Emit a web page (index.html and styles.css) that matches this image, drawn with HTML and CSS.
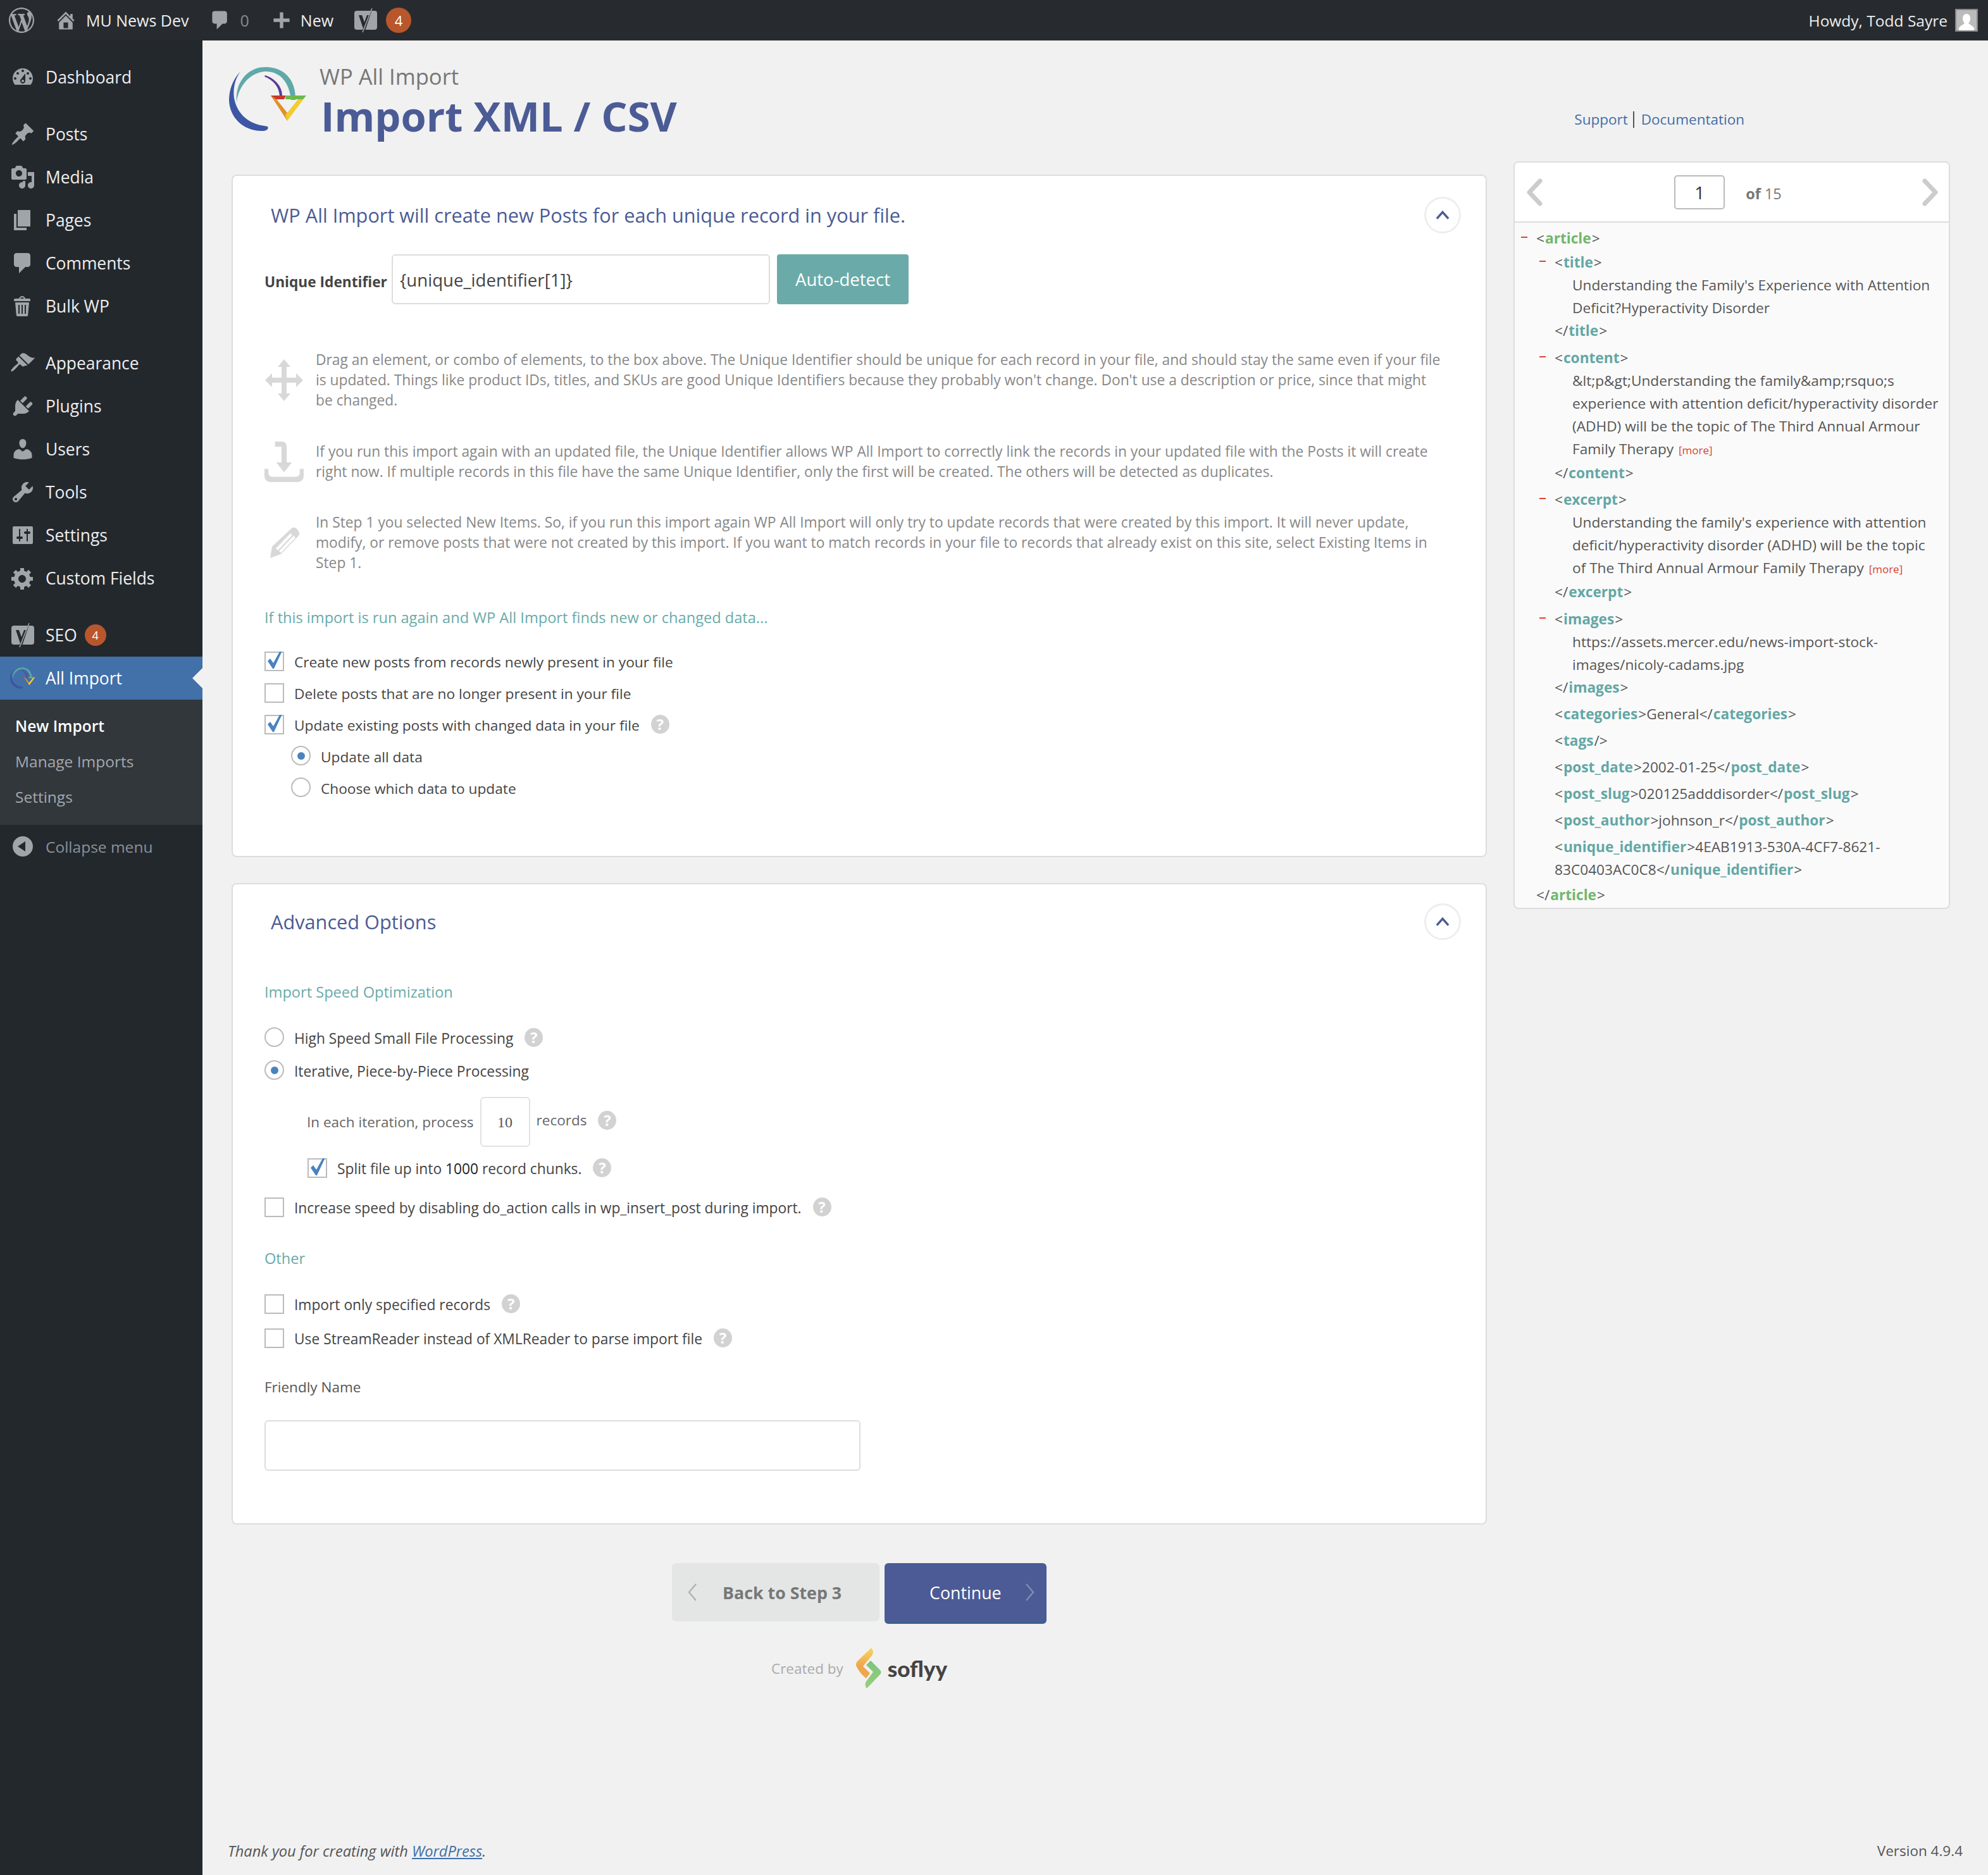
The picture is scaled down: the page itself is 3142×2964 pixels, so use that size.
FILE: index.html
```html
<!DOCTYPE html>
<html lang="en">
<head>
<meta charset="utf-8">
<title>WP All Import</title>
<link rel="stylesheet" href="styles.css">
</head>
<body>
<svg class="defs" width="0" height="0" aria-hidden="true">
  <symbol id="i-wp" viewBox="0 0 20 20"><path d="M20 10c0-5.51-4.49-10-10-10C4.48 0 0 4.49 0 10c0 5.52 4.48 10 10 10 5.51 0 10-4.48 10-10zM7.78 15.37L4.37 6.22c.55-.02 1.17-.08 1.17-.08.5-.06.44-1.13-.06-1.11 0 0-1.45.11-2.37.11-.18 0-.37 0-.58-.01C4.12 2.69 6.87 1.11 10 1.11c2.33 0 4.45.87 6.05 2.34-.68-.11-1.65.39-1.65 1.58 0 .74.45 1.36.9 2.1.35.61.55 1.36.55 2.46 0 1.49-1.4 5-1.4 5l-3.03-8.37c.54-.02.82-.17.82-.17.5-.05.44-1.25-.06-1.22 0 0-1.44.12-2.37.12-.85 0-2.29-.12-2.29-.12-.5-.03-.56 1.2-.06 1.22l.92.08 1.26 3.41zM17.41 10c.24-.64.74-1.87.43-4.25.7 1.29 1.05 2.71 1.05 4.25 0 3.29-1.73 6.24-4.4 7.78.97-2.59 1.94-5.2 2.92-7.78zM6.1 18.09C3.12 16.65 1.11 13.53 1.11 10c0-1.3.23-2.48.72-3.59C3.25 10.3 4.67 14.2 6.1 18.09zm4.03-6.63l2.58 6.98c-.86.29-1.76.45-2.71.45-.79 0-1.57-.11-2.29-.33.81-2.38 1.62-4.74 2.42-7.1z"/></symbol>
  <symbol id="i-home" viewBox="0 0 20 20"><path d="M16 8.5l1.53 1.53-1.06 1.06L10 4.62l-6.47 6.47-1.06-1.06L10 2.5l4 4v-2h2v4zm-6-2.46l6 5.99V18H4v-5.97zM12 17v-5H8v5h4z"/></symbol>
  <symbol id="i-comment" viewBox="0 0 20 20"><path d="M5 2h9c1.1 0 2 .9 2 2v7c0 1.1-.9 2-2 2h-2l-5 5v-5H5c-1.1 0-2-.9-2-2V4c0-1.1.9-2 2-2z"/></symbol>
  <symbol id="i-plus" viewBox="0 0 20 20"><path d="M17 8.5v3h-5.5V17h-3v-5.5H3v-3h5.5V3h3v5.5z"/></symbol>
  <symbol id="i-yoast" viewBox="0 0 36 40"><path d="M4 5h22L16 35H4a4 4 0 0 1-4-4V9a4 4 0 0 1 4-4zM27.500 5H32a4 4 0 0 1 4 4v22a4 4 0 0 1-4 4H17.500z"/><path class="y-cut" d="M7 12h5l4 11 4-11h5l-9 22c-1 3-3 5-6 5v-3c2 0 3-1 4-3z"/><path class="y-line" d="M28 1L13 39"/></symbol>
  <symbol id="i-dash" viewBox="0 0 20 20"><path d="M3.760 16h12.480c1.100-1.370 1.760-3.110 1.760-5 0-4.420-3.580-8-8-8s-8 3.580-8 8c0 1.890.660 3.630 1.760 5zM10 4c.55 0 1 .45 1 1s-.45 1-1 1-1-.45-1-1 .45-1 1-1zM6 6c.55 0 1 .45 1 1s-.45 1-1 1-1-.45-1-1 .45-1 1-1zm8 0c.55 0 1 .45 1 1s-.45 1-1 1-1-.45-1-1 .45-1 1-1zm-5.370 5.550L12 7v6c0 1.100-.9 2-2 2s-2-.9-2-2c0-.57.24-1.080.63-1.450zM4 10c.55 0 1 .45 1 1s-.45 1-1 1-1-.45-1-1 .45-1 1-1zm12 0c.55 0 1 .45 1 1s-.45 1-1 1-1-.45-1-1 .45-1 1-1zm-5 3c0-.55-.45-1-1-1s-1 .45-1 1 .45 1 1 1 1-.45 1-1z"/></symbol>
  <symbol id="i-pin" viewBox="0 0 20 20"><path d="M10.440 3.020l1.820-1.820 6.360 6.350-1.830 1.820c-1.050-.68-2.480-.57-3.410.36l-.75.75c-.92.93-1.040 2.350-.35 3.410l-1.830 1.820-2.410-2.410-2.800 2.790c-.42.42-3.380 2.710-3.800 2.290s1.860-3.390 2.280-3.810l2.790-2.790L4.100 9.360l1.830-1.820c1.050.69 2.480.57 3.400-.36l.75-.75c.93-.92 1.050-2.350.36-3.410z"/></symbol>
  <symbol id="i-media" viewBox="0 0 20 20"><path d="M13 11V4c0-.55-.45-1-1-1h-1.670L9 1H5L3.670 3H2c-.55 0-1 .45-1 1v7c0 .55.45 1 1 1h10c.55 0 1-.45 1-1zM7 4.500c1.380 0 2.500 1.120 2.500 2.500S8.380 9.500 7 9.500 4.500 8.380 4.500 7 5.620 4.500 7 4.500zM14 6h5v10.500c0 1.380-1.120 2.500-2.500 2.500S14 17.880 14 16.500s1.120-2.500 2.500-2.500c.17 0 .34.02.5.05V9h-3V6zm-4 8.050V13h2v3.500c0 1.380-1.120 2.500-2.500 2.500S7 17.880 7 16.500 8.120 14 9.500 14c.17 0 .34.02.5.05z"/></symbol>
  <symbol id="i-pages" viewBox="0 0 20 20"><path d="M6 15V2h10v13H6zm-1 1h8v2H3V5h2v11z"/></symbol>
  <symbol id="i-trash" viewBox="0 0 20 20"><path d="M12 4h3c.6 0 1 .4 1 1v1H3V5c0-.6.5-1 1-1h3c.2-1.100 1.300-2 2.500-2s2.300.9 2.500 2zM8 4h3c-.2-.6-.9-1-1.500-1S8.200 3.400 8 4zM4 7h11l-.9 10.100c0 .5-.5.9-1 .9H5.900c-.5 0-.9-.4-1-.9L4 7zm2.500 2v7h1V9zm2.500 0v7h1V9zm2.500 0v7h1V9z" fill-rule="evenodd"/></symbol>
  <symbol id="i-brush" viewBox="0 0 20 20"><path d="M14.480 11.060L7.410 3.990l1.500-1.500c.5-.56 2.300-.47 3.510.32 1.210.8 1.430 1.280 2.910 2.100 1.180.64 2.450 1.260 4.450.85zm-.71.71L6.700 4.700 4.930 6.470c-.39.39-.39 1.020 0 1.410l1.060 1.060c.39.39.39 1.030 0 1.420-.6.6-1.890 1.470-3.330 2.910-1.470 1.470-2.240 2.910-1.870 3.280s1.810-.4 3.280-1.870c1.440-1.440 2.310-2.730 2.910-3.330.39-.39 1.030-.39 1.420 0l1.060 1.060c.39.39 1.020.39 1.410 0z"/></symbol>
  <symbol id="i-plug" viewBox="0 0 20 20"><path d="M13.110 4.360L9.870 7.600 8 5.730l3.240-3.240c.35-.34 1.050-.2 1.560.32.52.51.66 1.210.31 1.550zm-8 1.770l.91-1.120 9.010 9.010-1.190.84c-.71.71-2.630 1.160-3.820 1.160H6.140L4.900 17.260c-.59.59-1.540.59-2.120 0-.59-.58-.59-1.530 0-2.120l1.240-1.240v-3.880c0-1.130.4-3.190 1.090-3.890zm7.260 3.970l3.240-3.240c.34-.35 1.040-.21 1.550.31.52.51.66 1.210.31 1.550l-3.240 3.250z"/></symbol>
  <symbol id="i-user" viewBox="0 0 20 20"><path d="M10 9.250c-2.270 0-2.730-3.440-2.730-3.440C7 4.020 7.820 2 9.970 2c2.160 0 2.980 2.020 2.710 3.810 0 0-.41 3.440-2.680 3.440zm0 2.570L12.720 10c2.390 0 4.520 2.330 4.520 4.530v2.490s-3.650 1.130-7.240 1.130c-3.650 0-7.240-1.130-7.240-1.130v-2.490c0-2.250 1.940-4.480 4.470-4.480z"/></symbol>
  <symbol id="i-tool" viewBox="0 0 20 20"><path d="M16.680 9.770c-1.340 1.340-3.300 1.670-4.950.99l-5.410 6.520c-.99.99-2.590.99-3.580 0s-.99-2.590 0-3.570l6.520-5.420c-.68-1.650-.35-3.610.99-4.950 1.280-1.280 3.120-1.620 4.720-1.060l-2.890 2.890 2.820 2.820 2.860-2.870c.53 1.580.18 3.390-1.080 4.650zM3.810 16.210c.4.39 1.040.39 1.430 0 .4-.4.4-1.040 0-1.430-.39-.4-1.030-.4-1.430 0-.39.39-.39 1.030 0 1.430z"/></symbol>
  <symbol id="i-sliders" viewBox="0 0 20 20"><path d="M18 16V4c0-.55-.45-1-1-1H3c-.55 0-1 .45-1 1v12c0 .55.45 1 1 1h14c.55 0 1-.45 1-1zM8 11h1c.55 0 1 .45 1 1s-.45 1-1 1H8v1.500c0 .28-.22.5-.5.5s-.5-.22-.5-.5V13H6c-.55 0-1-.45-1-1s.45-1 1-1h1V5.500c0-.28.22-.5.5-.5s.5.22.5.5V11zm5-2h-1c-.55 0-1-.45-1-1s.45-1 1-1h1V5.500c0-.28.22-.5.5-.5s.5.22.5.5V7h1c.55 0 1 .45 1 1s-.45 1-1 1h-1v5.500c0 .28-.22.5-.5.5s-.5-.22-.5-.5V9z"/></symbol>
  <symbol id="i-gear" viewBox="0 0 20 20"><path d="M18 12h-2.180c-.17.7-.44 1.350-.81 1.930l1.540 1.540-2.100 2.100-1.540-1.540c-.58.36-1.230.63-1.910.79V19H8v-2.180c-.68-.16-1.330-.43-1.910-.79l-1.540 1.540-2.120-2.120 1.540-1.540c-.36-.58-.63-1.230-.79-1.910H1V9.030h2.170c.16-.7.44-1.350.8-1.940L2.430 5.550l2.100-2.100 1.540 1.540c.58-.37 1.240-.64 1.930-.81V2h3v2.180c.68.16 1.330.43 1.910.79l1.540-1.540 2.120 2.120-1.540 1.540c.36.59.64 1.240.8 1.940H18V12zm-8.500 1.500c1.660 0 3-1.340 3-3s-1.340-3-3-3-3 1.340-3 3 1.340 3 3 3z"/></symbol>
  <symbol id="i-collapse" viewBox="0 0 20 20"><path fill-rule="evenodd" d="M10 2C5.580 2 2 5.580 2 10s3.580 8 8 8 8-3.580 8-8-3.580-8-8-8zm2 4v8l-6-4z"/></symbol>
  <symbol id="i-logo" viewBox="0 0 122 104">
    <path d="M58 1C36 1 21 14 14 34c-2 7-3 15-2 24 1-20 16-47 44-50 22-1 39 14 42 45h7C106 20 86 1 58 1z" fill="#5fa9a8"/>
    <path d="M18 8C5 22 0 38 0 54c1 26 22 49 54 48 6 0 9-4 7-7-3-1-7-1-11-2C27 88 12 72 8 50 6 36 9 20 18 8z" fill="#3d55a5"/>
    <path d="M57 14c16 5 27 18 27 32v1h-4c-1-14-9-25-24-31z" fill="#5a3d97"/>
    <path d="M66 46h24l-3 6H70z" fill="#c8362f"/>
    <path d="M90 46h32l-5 6H89z" fill="#6db84f"/>
    <path d="M66 46l26 40 3-9-20-25z" fill="#e2902a"/>
    <path d="M122 46L92 86l-3-9 20-25h8z" fill="#f2cc30"/>
  </symbol>
  <symbol id="i-move" viewBox="0 0 60 66"><path d="M30 0l10 12h-6v17h15v-7l11 11-11 11v-7H34v17h6L30 66 20 54h6V37H11v7L0 33l11-11v7h15V12h-6z"/></symbol>
  <symbol id="i-down" viewBox="0 0 60 62"><path d="M16 0h10c6 0 8 4 8 8v24h8L30 47 18 32h8V8h-10z"/><path d="M0 42h6v6c0 3 2 6 6 6h36c4 0 6-3 6-6v-6h6v10c0 6-4 10-10 10H10C4 62 0 58 0 52z"/></symbol>
  <symbol id="i-pencil" viewBox="0 0 46 48"><path fill-rule="evenodd" d="M34 1c3-2 6-1 8 1l3 4c2 3 1 5-1 8L17 42 0 48l3-18zM32 9L9 33l3 3L35 12zm5 4L14 37l3 3L40 16z"/></symbol>
  <symbol id="i-check" viewBox="0 0 24 28"><path d="M1 15l4-4 5 7L20 0h3.500L11 27H9z"/></symbol>
  <symbol id="i-soflyy" viewBox="0 0 40 64"><path d="M24 0c3 3 4 8 1 12L11 29l11 11-6 8C10 44 4 36 1 30c-2-3-1-6 1-9z" fill="url(#sg1)"/><path d="M23 20l15 15c2 2 2 5 0 7L17 64c-3-4-3-8-1-11l11-15-11-11z" fill="url(#sg2)"/></symbol>
  <defs>
    <linearGradient id="sg1" x1="0" y1="0" x2="0" y2="1"><stop offset="0" stop-color="#f5d75f"/><stop offset=".6" stop-color="#eea64f"/></linearGradient>
    <linearGradient id="sg2" x1="0" y1="0" x2="0" y2="1"><stop offset="0" stop-color="#7dc47a"/><stop offset="1" stop-color="#97cf7e"/></linearGradient>
  </defs>
</svg>

<header class="adminbar">
  <a class="ab-item ab-wp"><svg class="ab-logo"><use href="#i-wp"/></svg></a>
  <a class="ab-item ab-site"><svg class="ab-icon"><use href="#i-home"/></svg><span>MU News Dev</span></a>
  <a class="ab-item ab-comments"><svg class="ab-icon"><use href="#i-comment"/></svg><span class="ab-zero">0</span></a>
  <a class="ab-item ab-new"><svg class="ab-icon"><use href="#i-plus"/></svg><span>New</span></a>
  <a class="ab-item ab-seo"><svg class="ab-yoast"><use href="#i-yoast"/></svg><span class="badge-round">4</span></a>
  <a class="ab-item ab-user"><span>Howdy, Todd Sayre</span>
    <svg class="avatar" viewBox="0 0 36 36"><rect width="36" height="36" fill="#888"/><rect x="2" y="2" width="32" height="32" fill="#bbb"/><path d="M18 8c4 0 6 3 6 7 0 3-1 6-3 8 3 2 7 4 9 7v4H6v-4c2-3 6-5 9-7-2-2-3-5-3-8 0-4 2-7 6-7z" fill="#fff"/></svg>
  </a>
</header>

<div class="page">
  <nav class="sidebar">
    <ul class="menu first">
      <li class="menu-row"><svg class="m-icon"><use href="#i-dash"/></svg><span>Dashboard</span></li>
    </ul>
    <ul class="menu">
      <li class="menu-row"><svg class="m-icon"><use href="#i-pin"/></svg><span>Posts</span></li>
      <li class="menu-row"><svg class="m-icon"><use href="#i-media"/></svg><span>Media</span></li>
      <li class="menu-row"><svg class="m-icon"><use href="#i-pages"/></svg><span>Pages</span></li>
      <li class="menu-row"><svg class="m-icon"><use href="#i-comment"/></svg><span>Comments</span></li>
      <li class="menu-row"><svg class="m-icon"><use href="#i-trash"/></svg><span>Bulk WP</span></li>
    </ul>
    <ul class="menu">
      <li class="menu-row"><svg class="m-icon"><use href="#i-brush"/></svg><span>Appearance</span></li>
      <li class="menu-row"><svg class="m-icon"><use href="#i-plug"/></svg><span>Plugins</span></li>
      <li class="menu-row"><svg class="m-icon"><use href="#i-user"/></svg><span>Users</span></li>
      <li class="menu-row"><svg class="m-icon"><use href="#i-tool"/></svg><span>Tools</span></li>
      <li class="menu-row"><svg class="m-icon"><use href="#i-sliders"/></svg><span>Settings</span></li>
      <li class="menu-row"><svg class="m-icon"><use href="#i-gear"/></svg><span>Custom Fields</span></li>
    </ul>
    <ul class="menu">
      <li class="menu-row"><svg class="m-icon m-yoast"><use href="#i-yoast"/></svg><span>SEO</span><span class="badge-pill">4</span></li>
      <li class="menu-row active"><svg class="m-icon m-logo"><use href="#i-logo"/></svg><span>All Import</span></li>
    </ul>
    <ul class="submenu">
      <li class="current">New Import</li>
      <li>Manage Imports</li>
      <li>Settings</li>
    </ul>
    <div class="menu-row collapse"><svg class="m-icon"><use href="#i-collapse"/></svg><span>Collapse menu</span></div>
  </nav>

  <main class="content">
    <div class="page-head">
      <svg class="brand-logo"><use href="#i-logo"/></svg>
      <div class="brand-text">
        <div class="brand-small">WP All Import</div>
        <h1 class="brand-big">Import XML / CSV</h1>
      </div>
      <div class="head-links"><a>Support</a><span class="pipe"></span><a>Documentation</a></div>
    </div>

    <div class="columns">
      <div class="col-main">
        <section class="card">
          <div class="card-head">
            <h2>WP All Import will create new Posts for each unique record in your file.</h2>
            <span class="circle-btn"><svg viewBox="0 0 20 14"><path d="M2 12L10 3l8 9"/></svg></span>
          </div>
          <div class="card-body">
            <div class="uid-row">
              <label class="uid-label">Unique Identifier</label>
              <div class="uid-input">{unique_identifier[1]}</div>
              <button class="btn-auto">Auto-detect</button>
            </div>
            <div class="info info-1">
              <svg class="info-icon"><use href="#i-move"/></svg>
              <p>Drag an element, or combo of elements, to the box above. The Unique Identifier should be unique for each record in your file, and should stay the same even if your file<br>is updated. Things like product IDs, titles, and SKUs are good Unique Identifiers because they probably won't change. Don't use a description or price, since that might<br>be changed.</p>
            </div>
            <div class="info info-2">
              <svg class="info-icon"><use href="#i-down"/></svg>
              <p>If you run this import again with an updated file, the Unique Identifier allows WP All Import to correctly link the records in your updated file with the Posts it will create<br>right now. If multiple records in this file have the same Unique Identifier, only the first will be created. The others will be detected as duplicates.</p>
            </div>
            <div class="info info-3">
              <svg class="info-icon pencil"><use href="#i-pencil"/></svg>
              <p>In Step 1 you selected New Items. So, if you run this import again WP All Import will only try to update records that were created by this import. It will never update,<br>modify, or remove posts that were not created by this import. If you want to match records in your file to records that already exist on this site, select Existing Items in<br>Step 1.</p>
            </div>
            <h3 class="section-label again">If this import is run again and WP All Import finds new or changed data...</h3>
            <div class="opts again-opts">
              <div class="opt"><span class="box on"><svg><use href="#i-check"/></svg></span><span>Create new posts from records newly present in your file</span></div>
              <div class="opt"><span class="box"></span><span>Delete posts that are no longer present in your file</span></div>
              <div class="opt"><span class="box on"><svg><use href="#i-check"/></svg></span><span>Update existing posts with changed data in your file</span><span class="help">?</span></div>
              <div class="opt sub"><span class="radio on"></span><span>Update all data</span></div>
              <div class="opt sub"><span class="radio"></span><span>Choose which data to update</span></div>
            </div>
          </div>
        </section>

        <section class="card card-adv">
          <div class="card-head adv-head">
            <h2>Advanced Options</h2>
            <span class="circle-btn"><svg viewBox="0 0 20 14"><path d="M2 12L10 3l8 9"/></svg></span>
          </div>
          <div class="card-body">
            <h3 class="section-label speed">Import Speed Optimization</h3>
            <div class="opt tall speed-first"><span class="radio"></span><span>High Speed Small File Processing</span><span class="help">?</span></div>
            <div class="opt tall iterative"><span class="radio on"></span><span>Iterative, Piece-by-Piece Processing</span></div>
            <div class="iter-row">
              <span>In each iteration, process</span>
              <span class="iter-input">10</span>
              <span class="iter-after">records</span><span class="help">?</span>
            </div>
            <div class="opt split"><span class="box on"><svg><use href="#i-check"/></svg></span><span>Split file up into <span class="num">1000</span> record chunks.</span><span class="help">?</span></div>
            <div class="opt increase"><span class="box"></span><span>Increase speed by disabling do_action calls in wp_insert_post during import.</span><span class="help">?</span></div>
            <h3 class="section-label other">Other</h3>
            <div class="opt tall other-first"><span class="box"></span><span>Import only specified records</span><span class="help">?</span></div>
            <div class="opt tall"><span class="box"></span><span>Use StreamReader instead of XMLReader to parse import file</span><span class="help">?</span></div>
            <div class="friendly-label">Friendly Name</div>
            <div class="friendly-input"></div>
          </div>
        </section>

        <div class="actions">
          <a class="btn-back"><svg viewBox="0 0 16 30"><path d="M14 2L3 15l11 13"/></svg><span>Back to Step 3</span></a>
          <a class="btn-next"><span>Continue</span><svg viewBox="0 0 16 30"><path d="M2 2l11 13L2 28"/></svg></a>
        </div>
        <div class="credit">
          <span>Created by</span>
          <svg class="soflyy-mark"><use href="#i-soflyy"/></svg>
          <span class="soflyy-word">soflyy</span>
        </div>
      </div>

      <aside class="col-side">
        <div class="nav-head">
          <svg class="nav-arrow" viewBox="0 0 26 44"><path d="M22 4L5 22l17 18"/></svg>
          <div class="nav-mid"><span class="nav-input">1</span><span class="nav-of"><b>of</b> 15</span></div>
          <svg class="nav-arrow" viewBox="0 0 26 44"><path d="M4 4l17 18L4 40"/></svg>
        </div>
        <div class="tree">
          <div class="root">
            <div class="ln"><i class="minus"></i>&lt;<b class="g">article</b>&gt;</div>
            <div class="kids">
              <div class="node">
                <div class="ln"><i class="minus"></i>&lt;<b>title</b>&gt;</div>
                <div class="txt">Understanding the Family's Experience with Attention<br>Deficit?Hyperactivity Disorder</div>
                <div class="ln">&lt;/<b>title</b>&gt;</div>
              </div>
              <div class="node">
                <div class="ln"><i class="minus"></i>&lt;<b>content</b>&gt;</div>
                <div class="txt">&amp;lt;p&amp;gt;Understanding the family&amp;amp;rsquo;s<br>experience with attention deficit/hyperactivity disorder<br>(ADHD) will be the topic of The Third Annual Armour<br>Family Therapy <span class="more">[more]</span></div>
                <div class="ln">&lt;/<b>content</b>&gt;</div>
              </div>
              <div class="node">
                <div class="ln"><i class="minus"></i>&lt;<b>excerpt</b>&gt;</div>
                <div class="txt">Understanding the family's experience with attention<br>deficit/hyperactivity disorder (ADHD) will be the topic<br>of The Third Annual Armour Family Therapy <span class="more">[more]</span></div>
                <div class="ln">&lt;/<b>excerpt</b>&gt;</div>
              </div>
              <div class="node">
                <div class="ln"><i class="minus"></i>&lt;<b>images</b>&gt;</div>
                <div class="txt">https://assets.mercer.edu/news-import-stock-<br>images/nicoly-cadams.jpg</div>
                <div class="ln">&lt;/<b>images</b>&gt;</div>
              </div>
              <div class="leaf">&lt;<b>categories</b>&gt;General&lt;/<b>categories</b>&gt;</div>
              <div class="leaf">&lt;<b>tags</b>/&gt;</div>
              <div class="leaf">&lt;<b>post_date</b>&gt;2002-01-25&lt;/<b>post_date</b>&gt;</div>
              <div class="leaf">&lt;<b>post_slug</b>&gt;020125adddisorder&lt;/<b>post_slug</b>&gt;</div>
              <div class="leaf">&lt;<b>post_author</b>&gt;johnson_r&lt;/<b>post_author</b>&gt;</div>
              <div class="leaf last">&lt;<b>unique_identifier</b>&gt;4EAB1913-530A-4CF7-8621-<br>83C0403AC0C8&lt;/<b>unique_identifier</b>&gt;</div>
            </div>
            <div class="ln">&lt;/<b class="g">article</b>&gt;</div>
          </div>
        </div>
      </aside>
    </div>

    <footer class="foot">
      <span class="foot-thanks">Thank you for creating with <a>WordPress</a>.</span>
      <span>Version 4.9.4</span>
    </footer>
  </main>
</div>
</body>
</html>
```

FILE: styles.css
```css
* { box-sizing: border-box; }
html, body { margin: 0; padding: 0; }
body { background: #f1f1f1; font-family: "Open Sans", "Noto Sans", sans-serif; color: #444; font-size: 22.5px; }
.defs { position: absolute; }
ul { list-style: none; margin: 0; padding: 0; }
h1, h2, h3, p { margin: 0; }

/* admin bar */
.adminbar { height: 64px; background: #272b30; display: flex; align-items: center; color: #eee; font-size: 25px; }
.ab-item { display: flex; align-items: center; fill: #a0a5aa; }
.ab-wp { padding-left: 14px; }
.ab-logo { width: 40px; height: 40px; }
.ab-icon { width: 36px; height: 36px; }
.ab-site { margin-left: 32px; gap: 14px; }
.ab-comments { margin-left: 31px; gap: 14px; }
.ab-zero { color: #858a8f; }
.ab-new { margin-left: 33px; gap: 12px; }
.ab-seo { margin-left: 33px; gap: 14px; }
.ab-yoast { width: 36px; height: 40px; }
.y-cut { fill: #272b30; }
.y-line { stroke: #a0a5aa; stroke-width: 1.500; fill: none; }
.badge-round { width: 40px; height: 40px; border-radius: 50%; background: #b9562c; color: #fff; display: flex; align-items: center; justify-content: center; font-size: 22px; }
.ab-user { margin-left: auto; padding-right: 16px; gap: 12px; }
.ab-user span { font-size: 24.5px; }
.avatar { width: 36px; height: 36px; }

/* sidebar */
.page { display: flex; min-height: calc(100vh - 64px); }
.sidebar { width: 320px; flex: none; background: #23282d; color: #eee; font-size: 26.4px; }
.menu { margin-bottom: 22px; }
.menu.first { margin-top: 24px; }
.menu:nth-of-type(4) { margin-bottom: 0; }
.menu-row { height: 68px; display: flex; align-items: center; fill: #a0a5aa; position: relative; }
.m-icon { width: 40px; height: 40px; margin: 0 16px 0 16px; flex: none; }
.m-yoast { fill: #a0a5aa; }
.m-logo { width: 40px; height: 36px; }
.active { background: #4270a8; color: #fff; }
.active::after { content: ""; position: absolute; right: 0; top: 18px; border: 16px solid transparent; border-right-color: #f1f1f1; border-left-width: 0; }
.badge-pill { margin-left: 12px; width: 34px; height: 34px; border-radius: 50%; background: #b9562c; color: #fff; font-size: 18px; display: flex; align-items: center; justify-content: center; }
.submenu { background: #32373c; padding: 14px 0; font-size: 24.5px; color: #a4a8ac; height: 198px; }
.submenu li { height: 56px; line-height: 56px; padding-left: 24px; }
.submenu .current { color: #fff; font-weight: 600; }
.collapse { color: #8c9095; font-size: 24.5px; }
.collapse .m-icon { margin-right: 16px; }

/* page header */
.content { flex: 1; min-width: 0; display: flex; flex-direction: column; padding-left: 46px; }
.page-head { height: 191px; display: flex; padding: 37px 385px 0 0; margin-left: -4px; }
.brand-logo { width: 122px; height: 104px; flex: none; margin-top: 4px; }
.brand-text { margin-left: 21px; }
.brand-small { font-size: 34.6px; line-height: 40px; color: #777; }
.brand-big { font-size: 65px; line-height: 76px; font-weight: 700; color: #4b5b95; margin-top: 4px; margin-left: 2px; white-space: nowrap; }
.head-links { margin-left: auto; margin-top: 72px; color: #3f6fa8; font-size: 22.5px; line-height: 32px; display: flex; align-items: center; height: 32px; }
.pipe { width: 2px; height: 26px; background: #555; margin: 0 11px 0 8px; }

/* columns */
.columns { display: flex; gap: 42px; align-items: flex-start; }
.col-main { width: 1984px; flex: none; margin-top: 21px; }
.col-side { width: 690px; flex: none; background: #fafafa; border: 2px solid #ddd; border-radius: 8px; overflow: hidden; }

/* cards */
.card { background: #fff; border: 2px solid #ddd; border-radius: 8px; padding-bottom: 82px; }
.card-adv { margin-top: 41px; padding-bottom: 83px; }
.card-head { height: 124px; display: flex; align-items: center; justify-content: space-between; padding: 0 39px 0 60px; }
.adv-head { height: 118px; }
.card-head h2 { font-size: 30.7px; font-weight: 500; color: #4b5b95; }
.circle-btn { width: 58px; height: 58px; border: 3px solid #eee; border-radius: 50%; display: flex; align-items: center; justify-content: center; }
.circle-btn svg { width: 24px; height: 16px; fill: none; stroke: #4b5b95; stroke-width: 3; }
.card-body { padding: 0 50px; }

.uid-row { display: flex; align-items: center; height: 79px; }
.uid-label { width: 201px; font-weight: 700; font-size: 22.7px; color: #444; padding-top: 8px; white-space: nowrap; }
.uid-input { width: 598px; height: 79px; border: 2px solid #ddd; border-radius: 6px; padding: 0 11px; display: flex; align-items: center; font-size: 27.6px; color: #444; }
.btn-auto { margin-left: 11px; width: 208px; height: 79px; background: #6aabaa; border: 0; border-radius: 4px; color: #fff; font: inherit; font-size: 27.5px; }

.info { display: flex; align-items: center; color: #888; line-height: 32px; font-size: 22.78px; }
.info-icon { width: 62px; height: 66px; fill: #d8d8d8; flex: none; margin-right: 19px; }
.info-icon.pencil { width: 46px; height: 48px; margin: 0 26px 0 9px; }
.info p { white-space: nowrap; }
.info-1 { margin-top: 72px; }
.info-2 { margin-top: 48px; }
.info-3 { margin-top: 47px; }

.section-label { font-size: 23.6px; line-height: 32px; font-weight: 500; color: #6aabaa; }
.again { margin-top: 54px; }
.speed { margin-top: 36px; }
.other { margin-top: 39px; }
.again-opts { margin-top: 29px; }

.opt { height: 50px; display: flex; align-items: center; color: #444; gap: 16px; font-size: 22.7px; }
.card-adv .opt { font-size: 22.78px; }
.opt.tall { height: 54px; }
.opt.sub { padding-left: 42px; gap: 16px; }
.box { width: 31px; height: 31px; border: 2px solid #bbb; background: #fff; position: relative; flex: none; margin-top: -2px; }
.box svg { position: absolute; left: 2px; top: -2px; width: 24px; height: 28px; fill: #4a83bf; }
.radio { width: 31px; height: 31px; border: 2px solid #bbb; border-radius: 50%; position: relative; flex: none; background: #fff; margin-top: -3px; }
.radio.on::after { content: ""; position: absolute; left: 7.500px; top: 7.500px; width: 12px; height: 12px; border-radius: 50%; background: #4a83bf; }
.help { width: 29px; height: 30px; border-radius: 50%; background: #d2d2d2; color: #fff; font-size: 24px; line-height: 1; font-weight: 700; display: flex; align-items: center; justify-content: center; flex: none; margin-left: 2px; margin-top: -3px; }

.speed-first { margin-top: 30px; }
.iterative { margin-top: -2px; }
.iter-row { margin: 14px 0 0 67px; height: 79px; display: flex; align-items: center; color: #666; }
.iter-input { width: 79px; height: 79px; margin: 0 10px; border: 2px solid #e2e2e2; border-radius: 6px; display: flex; align-items: center; justify-content: center; font-family: "Liberation Serif", serif; font-size: 24px; color: #555; padding-top: 2px; }
.iter-after { margin-right: 16px; margin-top: -6px; }
.iter-row .help { margin-top: -6px; }
.split { margin: 9px 0 0 68px; }
.num { color: #222; }
.increase { margin-top: 12px; }
.other-first { margin-top: 30px; }
.friendly-label { margin-top: 34px; line-height: 32px; color: #555; }
.friendly-input { margin-top: 36px; width: 942px; height: 80px; border: 2px solid #ddd; border-radius: 6px; }

/* actions */
.actions { margin-top: 61px; display: flex; justify-content: center; align-items: flex-start; gap: 8px; }
.btn-back, .btn-next { display: flex; align-items: center; font-size: 26.8px; border-radius: 6px; }
.btn-back svg, .btn-next svg { width: 16px; height: 30px; fill: none; stroke-width: 2.500; }
.btn-back { width: 328px; height: 92px; background: #e4e6e6; color: #777; font-weight: 700; padding-left: 24px; gap: 40px; }
.btn-back svg { stroke: #b0b3b3; }
.btn-next { width: 256px; height: 96px; background: #4c5b95; color: #fff; border-bottom: 4px solid #3d6290; padding-left: 71px; gap: 37px; }
.btn-next svg { stroke: #7f8bb5; }
.credit { margin-top: 38px; display: flex; justify-content: center; align-items: center; height: 64px; color: #aaa; }
.soflyy-mark { width: 40px; height: 64px; margin: 0 10px 0 20px; }
.soflyy-word { font-size: 35px; color: #444; font-family: "Lato", sans-serif; font-weight: 900; }

/* side panel */
.nav-head { height: 95px; background: #fff; border-bottom: 2px solid #ddd; display: flex; align-items: center; justify-content: space-between; padding: 0 16px 0 18px; }
.nav-arrow { width: 26px; height: 44px; fill: none; stroke: #ccc; stroke-width: 7; stroke-linecap: round; stroke-linejoin: round; }
.nav-mid { display: flex; align-items: center; margin-right: 14px; }
.nav-input { width: 80px; height: 54px; border: 2px solid #bbb; border-radius: 5px; display: flex; align-items: center; justify-content: center; font-size: 28px; color: #333; }
.nav-of { margin-left: 33px; color: #777; font-size: 23.5px; padding-top: 4px; }
.tree { padding: 7px 10px 0 34px; line-height: 36px; color: #555; white-space: nowrap; font-size: 22.66px; }
.tree b { font-weight: 700; color: #63a7a5; margin: 0 1px; }
.tree b.g { color: #70b76c; }
.kids { padding: 2px 0 0 29px; }
.node { margin-bottom: 6.5px; }
.root { padding-bottom: 2px; }
.ln { position: relative; }
.minus { position: absolute; left: -24px; top: 15px; width: 10px; height: 2px; background: #e2412e; }
.txt { padding-left: 28px; }
.more { color: #d9432f; font-size: 17px; margin-left: 2px; }
.leaf { margin-bottom: 6px; }
.leaf.last { margin-bottom: 4px; }

/* footer */
.foot { margin-top: auto; height: 54px; padding: 0 40px 0 0; margin-left: -6px; display: flex; justify-content: space-between; color: #555; font-size: 22.5px; }
.foot-thanks { font-style: italic; font-size: 23.6px; }
.foot a { color: #3f6fa8; text-decoration: underline; }
```
